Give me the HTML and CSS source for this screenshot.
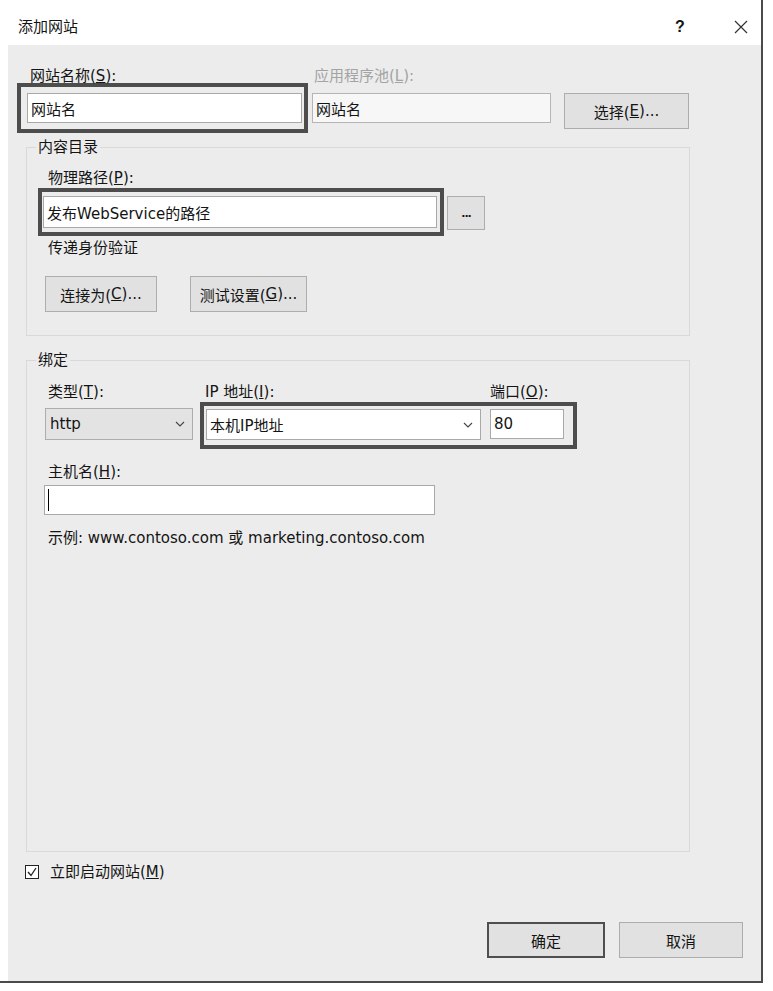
FILE: index.html
```html
<!DOCTYPE html>
<html>
<head>
  <meta charset="utf-8">
  <title>添加网站</title>
  <link rel="stylesheet" href="styles.css">
</head>
<body>
  <div class="dialog">
    <div class="titlebar">
      <span class="title">添加网站</span>
      <span class="help">?</span>
      <svg class="close" width="14" height="14" viewBox="0 0 14 14">
        <path d="M1 1 L13 13 M13 1 L1 13" stroke="#333" stroke-width="1.2" fill="none"/>
      </svg>
    </div>

    <div class="content">
      <!-- 网站名称 / 应用程序池 -->
      <div class="top-row">
        <div class="site-col">
          <div class="label">网站名称(<u>S</u>):</div>
          <div class="hl">
            <div class="field site">网站名</div>
          </div>
        </div>
        <div class="pool-col">
          <div class="label muted">应用程序池(<u>L</u>):</div>
          <div class="field pool">网站名</div>
        </div>
        <div class="btn btn-select">选择(<u>E</u>)...</div>
      </div>

      <!-- 内容目录 -->
      <fieldset class="group content-dir">
        <legend>内容目录</legend>
        <div class="label">物理路径(<u>P</u>):</div>
        <div class="path-row">
          <div class="hl">
            <div class="field path">发布WebService的路径</div>
          </div>
          <div class="btn btn-browse">...</div>
        </div>
        <div class="label pass">传递身份验证</div>
        <div class="btn-row">
          <div class="btn btn-connect">连接为(<u>C</u>)...</div>
          <div class="btn btn-test">测试设置(<u>G</u>)...</div>
        </div>
      </fieldset>

      <!-- 绑定 -->
      <fieldset class="group binding">
        <legend>绑定</legend>
        <div class="bind-labels">
          <div class="label l-type">类型(<u>T</u>):</div>
          <div class="label l-ip">IP 地址(<u>I</u>):</div>
          <div class="label">端口(<u>O</u>):</div>
        </div>
        <div class="bind-row">
          <div class="select type">
            <span>http</span>
            <svg width="10" height="6" viewBox="0 0 10 6"><polyline points="1,1 5,5 9,1" stroke="#444" stroke-width="1.1" fill="none"/></svg>
          </div>
          <div class="hl">
            <div class="select ip">
              <span>本机IP地址</span>
              <svg width="10" height="6" viewBox="0 0 10 6"><polyline points="1,1 5,5 9,1" stroke="#444" stroke-width="1.1" fill="none"/></svg>
            </div>
            <div class="field port">80</div>
          </div>
        </div>
        <div class="label host">主机名(<u>H</u>):</div>
        <div class="field host"><span class="caret"></span></div>
        <div class="example">示例: www.contoso.com 或 marketing.contoso.com</div>
      </fieldset>

      <div class="check-row">
        <svg class="checkbox" width="14" height="14" viewBox="0 0 14 14">
          <rect x="0.5" y="0.5" width="13" height="13" fill="#fff" stroke="#222"/>
          <polyline points="3,7 6,10.5 11,3" stroke="#222" stroke-width="1.3" fill="none"/>
        </svg>
        <span>立即启动网站(<u>M</u>)</span>
      </div>

      <div class="actions">
        <div class="btn btn-ok">确定</div>
        <div class="btn btn-cancel">取消</div>
      </div>
    </div>
  </div>
</body>
</html>
```

FILE: styles.css
```css
/* 添加网站 对话框 */
body {
  margin: 0;
  background: #fff;
  font-family: "DejaVu Sans", "Noto Sans CJK SC", sans-serif;
  font-size: 15px;
  color: #141414;
}

.dialog {
  width: 761px;
  height: 981px;
  border-right: 2px solid #4b4b4b;
  border-bottom: 2px solid #4b4b4b;
  display: flex;
  flex-direction: column;
}

.titlebar {
  height: 45px;
  box-sizing: border-box;
  display: flex;
  align-items: flex-start;
  padding: 18px 13px 0 18px;
  line-height: 18px;
  background: #fff;
}

.title {
  font-size: 15px;
}

.help {
  margin-left: auto;
  width: 10px;
  margin-right: 49px;
  font-size: 16px;
  font-weight: bold;
  font-family: "Liberation Sans", sans-serif;
}

.close {
  margin-top: 2px;
}

.content {
  flex: 1;
  margin-left: 8px;
  background: #ececec;
  padding: 22px 0 0 9px;
  display: flex;
  flex-direction: column;
}

.label {
  line-height: 18px;
  height: 18px;
  white-space: nowrap;
}

.muted {
  color: #a3a3a3;
}

.hl {
  border: 4px solid #4d4d4d;
}

.field, .select {
  box-sizing: border-box;
  background: #fff;
  border: 1px solid #a9a9a9;
  display: flex;
  align-items: center;
  padding-left: 3px;
  white-space: nowrap;
}

.btn {
  box-sizing: border-box;
  background: #e1e1e1;
  border: 1px solid #adadad;
  display: flex;
  align-items: center;
  justify-content: center;
  white-space: nowrap;
}

/* 第一行 */
.top-row {
  display: flex;
}

.site-col {
  width: 291px;
}

.site-col .label {
  padding-left: 13px;
}

.site-col .hl {
  margin-top: -2px;
  padding: 6px 2px 6px 6px;
}

.field.site {
  height: 30px;
}

.pool-col {
  margin-left: 4px;
}

.pool-col .label {
  padding-left: 2px;
}

.field.pool {
  width: 239px;
  height: 30px;
  margin-top: 8px;
  background: #f7f7f7;
  border-color: #b5b5b5;
}

.btn-select {
  width: 125px;
  height: 36px;
  margin: 26px 0 0 13px;
}

/* 分组框 */
.group {
  box-sizing: border-box;
  width: 664px;
  margin: 0 0 0 9px;
  border: 1px solid #d9d9d9;
  padding: 13px 0 23px 21px;
  min-width: 0;
}

.group legend {
  padding: 0 2px;
  margin-left: -12px;
  line-height: 18px;
}

.content-dir {
  margin-top: 5px;
}

.path-row {
  display: flex;
  align-items: flex-start;
  margin: 1px 0 0 -10px;
}

.path-row .hl {
  padding: 4px 3px 4px 1px;
}

.field.path {
  width: 394px;
  height: 32px;
}

.btn-browse {
  width: 38px;
  height: 34px;
  margin: 8px 0 0 3px;
  font-size: 11px;
  font-weight: bold;
  letter-spacing: -1px;
}

.label.pass {
  margin-top: 3px;
}

.btn-row {
  display: flex;
  gap: 33px;
  margin: 19px 0 0 -3px;
}

.btn-connect, .btn-test {
  height: 36px;
}

.btn-connect {
  width: 112px;
}

.btn-test {
  width: 117px;
}

.binding {
  margin-top: 15px;
  height: 501px;
  padding-top: 14px;
}

.bind-labels {
  display: flex;
}

.l-type {
  width: 157px;
}

.l-ip {
  width: 285px;
}

.bind-row {
  display: flex;
  align-items: flex-start;
  margin: 1px 0 0 -3px;
}

.select {
  justify-content: space-between;
  padding-right: 7px;
}

.select.type {
  width: 148px;
  height: 32px;
  margin-top: 6px;
  background: #e3e3e3;
  border-color: #adadad;
  padding-left: 4px;
}

.bind-row .hl {
  margin-left: 7px;
  padding: 3px 9px 5px 2px;
  display: flex;
  align-items: flex-start;
  gap: 9px;
}

.select.ip {
  width: 275px;
  height: 31px;
}

.field.port {
  width: 74px;
  height: 30px;
}

.label.host {
  margin-top: 14px;
}

.field.host {
  width: 391px;
  height: 30px;
  margin: 4px 0 0 -4px;
}

.caret {
  width: 1px;
  height: 22px;
  background: #000;
}

.example {
  margin-top: 14px;
  line-height: 18px;
  white-space: nowrap;
}

/* 底部 */
.check-row {
  display: flex;
  align-items: center;
  gap: 11px;
  margin: 11px 0 0 8px;
  line-height: 18px;
}

.actions {
  display: flex;
  justify-content: flex-end;
  gap: 14px;
  margin-top: 41px;
  padding-right: 18px;
}

.btn-ok {
  width: 118px;
  height: 36px;
  border: 2px solid #4f4f4f;
}

.btn-cancel {
  width: 124px;
  height: 36px;
}
```
